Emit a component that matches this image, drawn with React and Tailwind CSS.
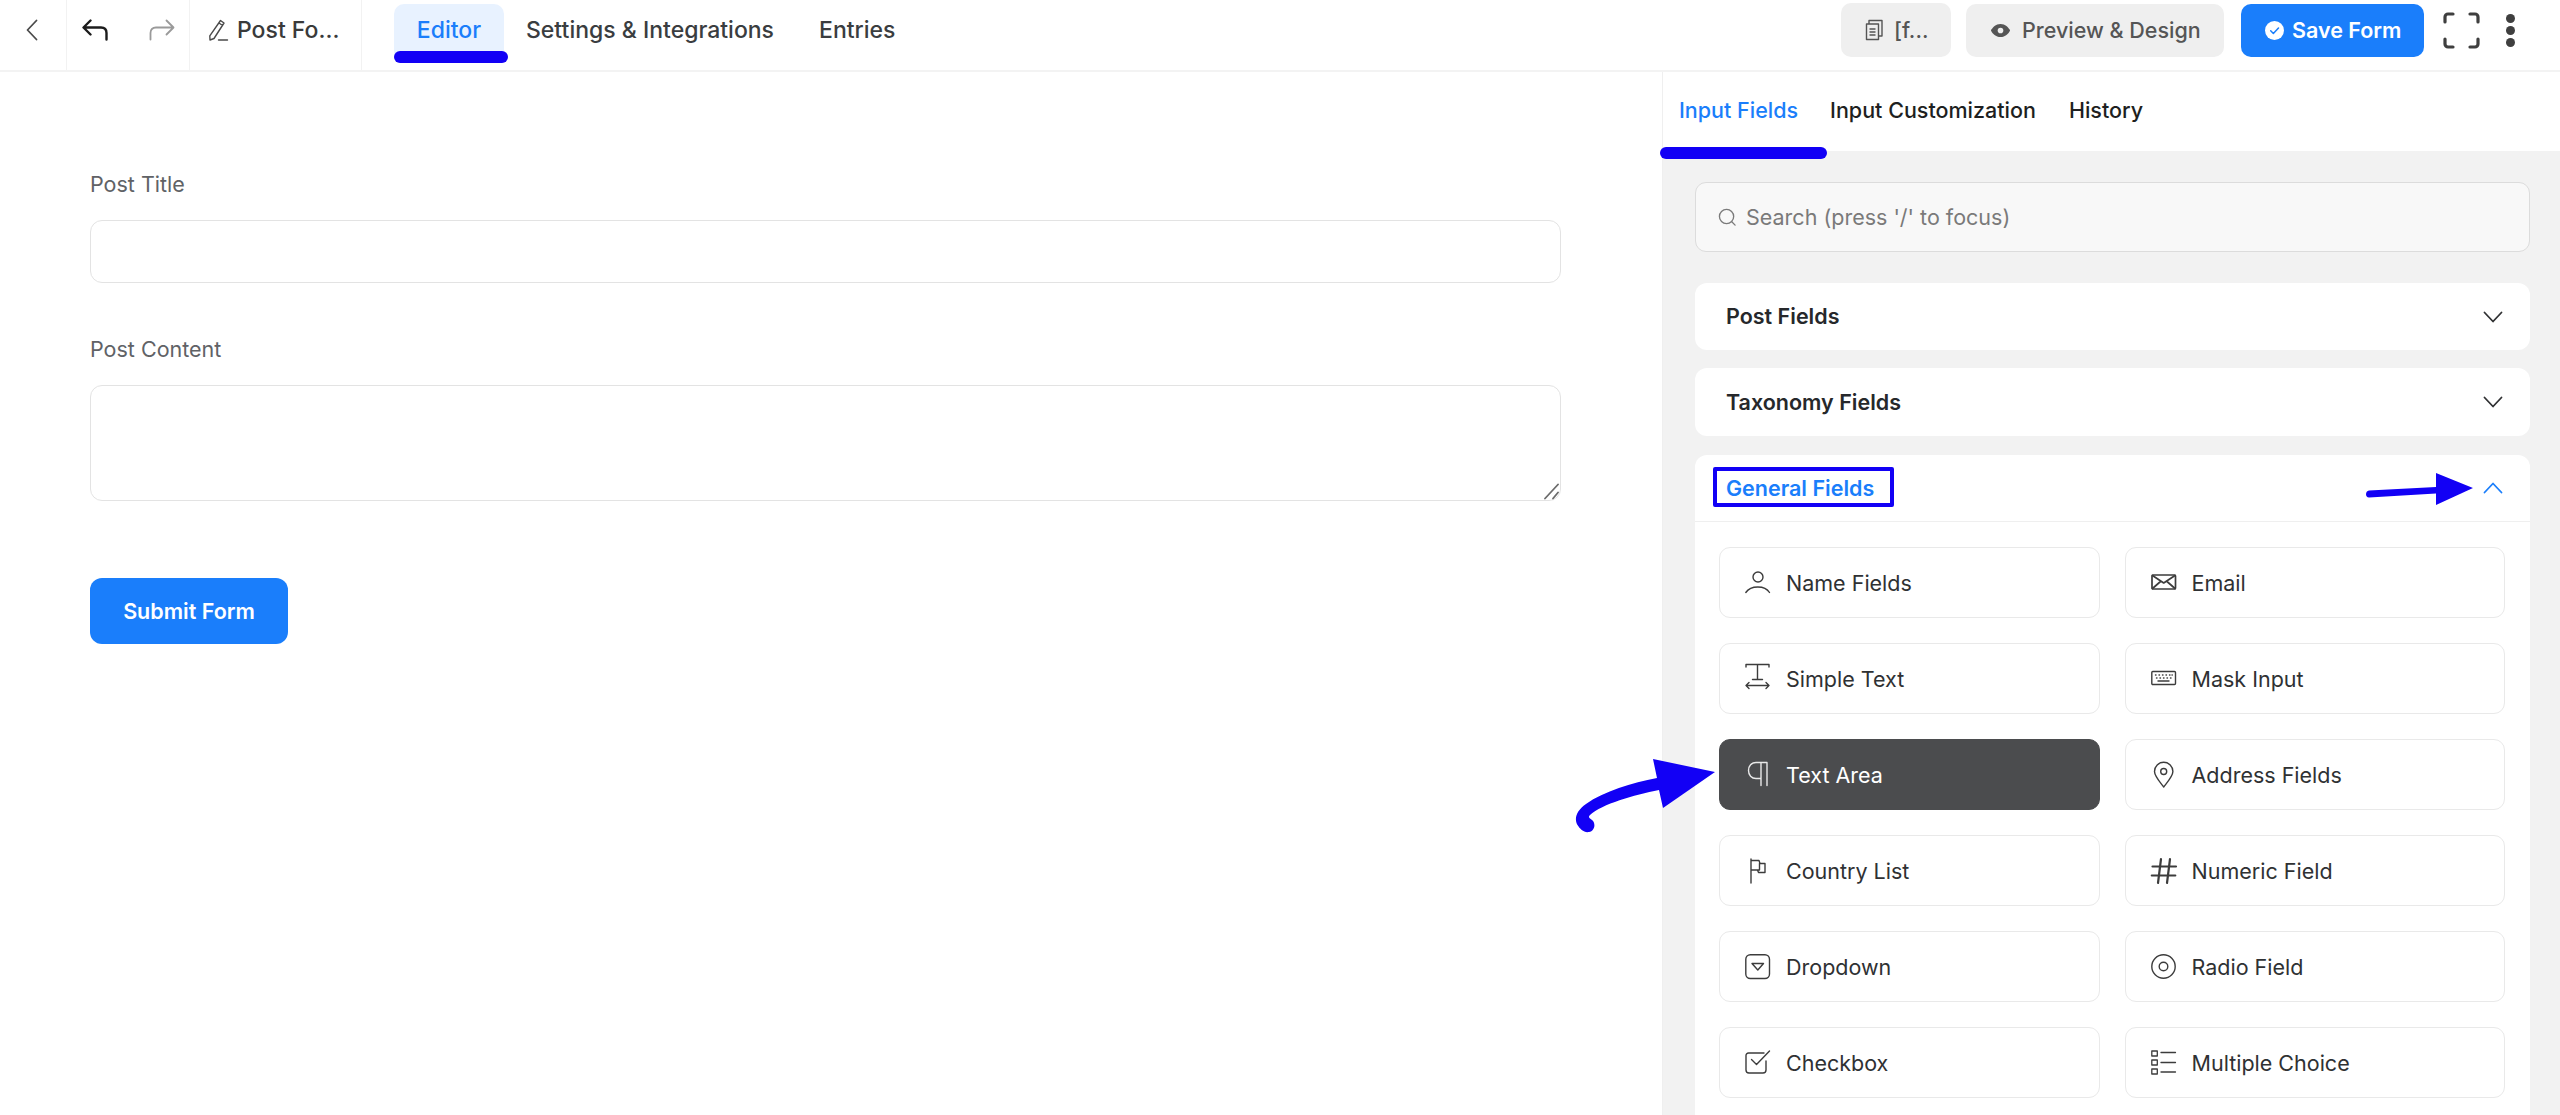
const FONT = "font-['Inter','Noto_Sans',sans-serif]";

const S = ({ children, className = "w-[25px] h-[25px]", vb = "0 0 25 25", sw = 1.4 }) => (
  <svg viewBox={vb} className={className + " shrink-0 overflow-visible"} fill="none" stroke="currentColor" strokeWidth={sw} strokeLinecap="round" strokeLinejoin="round">
    {children}
  </svg>
);

const icons = {
  person: <S><circle cx="13" cy="7" r="5" /><path d="M0.8 22.5C3.5 18.5 8 17 12.8 17s9.2 1.5 11.7 5.5" /></S>,
  email: <S sw={1.7}><rect x="1" y="5" width="23.5" height="14" rx="1" /><path d="M1.5 5.5 12.7 13 24 5.5M1.5 18.5 9.5 11.5M24 18.5 16 11.5" /></S>,
  text: <S><path d="M1 -1.5h23M1 -1.5v2.500M24 -1.5v2.500M12.500 -1.5v15M7.500 13.500h10M1 19.500h23M4 16.500l-3 3 3 3M21 16.500l3 3-3 3" /></S>,
  keyboard: <S sw={1.4}><rect x="0.8" y="5.5" width="23.7" height="13" rx="1" /><path d="M4.5 9h.5M8 9h.5M11.5 9h.5M15 9h.5M18.5 9h.5M21 9h.3M5.5 12h.5M9 12h.5M12.5 12h.5M16 12h.5M19.5 12h.5M7 15h11" /></S>,
  para: <S><path d="M22 0.5H11C6.500 0.5 3.500 4 3.500 8.500s3 8 7.500 8h5M16 0.5V23.500M22 0.5V23.500" /></S>,
  pin: <S><path d="M12.7 25C8.5 19.5 3.5 14 3.5 9.5a9.2 9.2 0 0 1 18.4 0c0 4.5-5 10-9.2 15.5Z" /><circle cx="12.7" cy="9.5" r="3" /></S>,
  flag: <S><path d="M6 1v24M6 2.5 14 2.5 15 5.5H20V14.5H13.5L12.5 12H6M14.5 5.5v6.5h-2" /></S>,
  hash: <S sw={2.2}><path d="M10 1 7 25M19 1 16 25M1.5 8.5h23.5M0.8 17.5h23.5" /></S>,
  dropdown: <S><rect x="0.8" y="0.8" width="23.7" height="23.7" rx="4.5" /><path d="M7 9.5h11.5L12.8 16Z" /></S>,
  radio: <S><circle cx="12.5" cy="12.5" r="11.7" /><circle cx="12.5" cy="12.5" r="4.3" /></S>,
  check: <S><path d="M21 11v9a3 3 0 0 1-3 3H4a3 3 0 0 1-3-3V5.500A2.500 2.500 0 0 1 3.500 3H19M6.500 9.500l5 5L24.500 1" /></S>,
  multi: <S sw={1.3}><rect x="0.8" y="1" width="5.5" height="5" /><rect x="0.8" y="10" width="5.5" height="5" /><rect x="0.8" y="19" width="5.5" height="5" /><path d="M10 2.5h14.5M10 12.5h14.5M10 22h14.5" /></S>,
};

const items = [
  ["person", "Name Fields"], ["email", "Email"],
  ["text", "Simple Text"], ["keyboard", "Mask Input"],
  ["para", "Text Area", true], ["pin", "Address Fields"],
  ["flag", "Country List"], ["hash", "Numeric Field"],
  ["dropdown", "Dropdown"], ["radio", "Radio Field"],
  ["check", "Checkbox"], ["multi", "Multiple Choice"],
];

function FieldCard({ icon, label, active }) {
  return (
    <div className={"h-[71px] rounded-[11px] border flex items-center gap-[16px] pl-[25px] text-[21.5px] " + (active ? "bg-[#4b4c4e] border-[#4b4c4e] text-white" : "bg-white border-[#e9e9e9] text-[#2f3133]")}>
      <span className={active ? "text-[#e9e9e9]" : "text-[#3c3c3c]"}>{icons[icon]}</span>
      <span className="pt-[2px]">{label}</span>
    </div>
  );
}

const Chevron = ({ up, color = "#303133" }) => (
  <svg viewBox="0 0 20 12" className="w-[20px] h-[12px]" fill="none" stroke={color} strokeWidth="1.8" strokeLinecap="round" strokeLinejoin="round">
    <path d={up ? "M1.5 10.5 10 1.5l8.5 9" : "M1.5 1.5 10 10.5l8.5-9"} />
  </svg>
);

export default function App() {
  return (
    <div className={FONT + " relative w-full h-[1115px] overflow-hidden bg-white flex flex-col"}>
      {/* top bar */}
      <header className="h-[72px] shrink-0 border-b-2 border-[#f3f3f3] flex items-stretch bg-white">
        <div className="w-[67px] border-r border-[#f2f2f2] flex items-center justify-center pr-[2px] pb-[10px]">
          <svg viewBox="0 0 12 22" className="w-[12px] h-[22px]" fill="none" stroke="#4b4b4b" strokeWidth="1.8" strokeLinecap="round" strokeLinejoin="round"><path d="M10.5 1.5 1.5 11l9 9.5" /></svg>
        </div>
        <div className="w-[123px] border-r border-[#f2f2f2] flex items-center pl-[15px] gap-[41px] pb-[10px]">
          <svg viewBox="0 0 26 22" className="w-[26px] h-[22px]" fill="none" stroke="#1c1c1c" strokeWidth="2.4" strokeLinecap="round" strokeLinejoin="round"><path d="M8.5 1.5 1.5 8.5l7 7M2 8.5h17c3.500 0 5.500 2 5.500 5.500v6.500" /></svg>
          <svg viewBox="0 0 26 22" className="w-[26px] h-[22px]" fill="none" stroke="#9a9a9a" strokeWidth="1.8" strokeLinecap="round" strokeLinejoin="round"><path d="M17.500 1.500l7 7-7 7M24 8.500H7C3.500 8.500 1.500 10.500 1.500 14v6.500" /></svg>
        </div>
        <div className="w-[172px] border-r border-[#f2f2f2] flex items-center pl-[17px] gap-[8px] pb-[10px] text-[23px] text-[#3a3a3a] font-medium">
          <svg viewBox="0 0 22 24" className="w-[22px] h-[24px] shrink-0" fill="none" stroke="#4a4a4a" strokeWidth="1.4" strokeLinecap="round" strokeLinejoin="round"><path d="M13.500 2.500l3.500 2.500L7 20.500l-4 1.500-.2-4.200ZM12 5l3.500 2.500M11.500 22h9" /></svg>
          <span>Post Fo...</span>
        </div>
        <nav className="flex items-start pl-[32px] pt-[4px] text-[23px] font-medium text-[#3a3d40]">
          <div className="h-[52px] w-[110px] rounded-t-[10px] rounded-b-none bg-[#e8f2ff] text-[#1a7efb] flex items-center justify-center">Editor</div>
          <div className="h-[52px] flex items-center ml-[22px]">Settings &amp; Integrations</div>
          <div className="h-[52px] flex items-center ml-[45px]">Entries</div>
        </nav>
        <div className="ml-auto flex items-start pt-[3px] pr-[45px]">
          <button className="h-[54px] w-[110px] rounded-[10px] bg-[#efefef] flex items-center gap-[9px] pl-[22px] text-[21.5px] text-[#555555] font-medium">
            <svg viewBox="0 0 22 24" className="w-[22px] h-[24px] shrink-0" fill="none" stroke="#555" strokeWidth="1.400" strokeLinejoin="round"><path d="M6 6V2.500h13V18h-3" /><path d="M3.500 6H15.500V21.500H3.500Z" /><path d="M6.500 11H12.500M6.500 14H12.500M6.500 17H12.500" /></svg>
            <span>[f...</span>
          </button>
          <button className="h-[53px] w-[258px] ml-[15px] mt-[1px] rounded-[10px] bg-[#efefef] flex items-center gap-[11px] pl-[24px] text-[21.5px] text-[#555555] font-medium">
            <svg viewBox="0 0 22 16" className="w-[21px] h-[15px] shrink-0"><path d="M11 1C6 1 2.500 4.500.8 8c1.700 3.500 5.200 7 10.200 7s8.500-3.500 10.200-7C19.500 4.500 16 1 11 1Z" fill="#555" /><circle cx="11" cy="8" r="3" fill="#efefef" /></svg>
            <span>Preview &amp; Design</span>
          </button>
          <button className="h-[53px] w-[183px] ml-[17px] mt-[1px] rounded-[10px] bg-[#1a7efb] flex items-center gap-[8px] pl-[24px] text-[21.5px] text-white font-semibold">
            <svg viewBox="0 0 20 20" className="w-[19px] h-[19px] shrink-0"><circle cx="10" cy="10" r="10" fill="#fff" /><path d="M6 10.300l2.800 2.800L14.200 7.300" fill="none" stroke="#1a7efb" strokeWidth="1.600" strokeLinecap="round" strokeLinejoin="round" /></svg>
            <span>Save Form</span>
          </button>
          <svg viewBox="0 0 37 37" className="w-[37px] h-[37px] ml-[19px] mt-[9px]" fill="none" stroke="#3f3f3f" strokeWidth="3.200" strokeLinecap="round" strokeLinejoin="round"><path d="M2 10V5a3 3 0 0 1 3-3h5M27 2h5a3 3 0 0 1 3 3v5M35 27v5a3 3 0 0 1-3 3h-5M10 35H5a3 3 0 0 1-3-3v-5" /></svg>
          <div className="ml-[26px] mt-[11px] flex flex-col gap-[3px]">
            <span className="block w-[9px] h-[9px] rounded-full bg-[#3f3f3f]" />
            <span className="block w-[9px] h-[9px] rounded-full bg-[#3f3f3f]" />
            <span className="block w-[9px] h-[9px] rounded-full bg-[#3f3f3f]" />
          </div>
        </div>
      </header>

      <div className="flex-1 flex min-h-0">
        {/* form canvas */}
        <main className="w-[1662px] shrink-0 pl-[90px] pr-[101px] pt-[96px] text-[#606266]">
          <label className="block h-[32px] leading-[32px] text-[21.5px] mb-[20px]">Post Title</label>
          <input className="block w-full h-[63px] rounded-[12px] border border-[#e3e3e3] bg-white outline-none" />
          <label className="block h-[32px] leading-[32px] text-[21.5px] mt-[50px] mb-[20px]">Post Content</label>
          <div className="relative">
            <textarea className="block w-full h-[116px] rounded-[12px] border border-[#e3e3e3] bg-white outline-none resize-none" />
            <svg viewBox="0 0 16 17" className="absolute right-[1px] bottom-[1px] w-[16px] h-[17px]" fill="none" stroke="#6b6b6b" strokeWidth="1.800" strokeLinecap="round"><path d="M1 15.500 14 1.500M9 15.500 14 9.500" /></svg>
          </div>
          <button className="block mt-[77px] w-[198px] h-[66px] rounded-[12px] bg-[#1a7efb] text-white text-[21.5px] font-semibold">Submit Form</button>
        </main>

        {/* sidebar */}
        <aside className="flex-1 min-w-0 flex flex-col border-l border-[#efefef]">
          <div className="h-[79px] shrink-0 flex items-start pt-[22px] pl-[16px] text-[21.5px] font-medium text-[#1e1f21] bg-white">
            <span className="text-[#1a7efb]">Input Fields</span>
            <span className="ml-[32px]">Input Customization</span>
            <span className="ml-[33px]">History</span>
          </div>
          <div className="flex-1 min-h-0 overflow-hidden bg-[#f2f2f2] pl-[32px] pr-[30px] pt-[31px]">
            <div className="h-[70px] rounded-[11px] border border-[#dcdcdc] bg-[#f8f8f8] flex items-center pl-[22px] gap-[9px] text-[21.5px] text-[#7a7a7a]">
              <svg viewBox="0 0 20 20" className="w-[19px] h-[19px] shrink-0" fill="none" stroke="#7a7a7a" strokeWidth="1.400" strokeLinecap="round"><circle cx="9" cy="9" r="7.500" /><path d="M14.500 14.500 18 18" /></svg>
              <span>Search (press '/' to focus)</span>
            </div>
            <div className="mt-[31px] h-[67px] rounded-[12px] bg-white flex items-center justify-between pl-[31px] pr-[27px] text-[21.5px] font-semibold text-[#26282b]">
              <span>Post Fields</span><Chevron />
            </div>
            <div className="mt-[18px] h-[68px] rounded-[12px] bg-white flex items-center justify-between pl-[31px] pr-[27px] text-[21.5px] font-semibold text-[#26282b]">
              <span>Taxonomy Fields</span><Chevron />
            </div>
            <div className="mt-[19px] rounded-t-[12px] bg-white min-h-[700px]">
              <div className="h-[67px] border-b border-[#efefef] flex items-center justify-between pl-[31px] pr-[27px] text-[21.5px] font-semibold text-[#1a7efb]">
                <span>General Fields</span><Chevron up color="#1a7efb" />
              </div>
              <div className="grid grid-cols-2 gap-x-[25px] gap-y-[25px] pt-[25px] pl-[24px] pr-[25px]">
                {items.map(([i, l, a]) => <FieldCard key={l} icon={i} label={l} active={a} />)}
              </div>
            </div>
          </div>
        </aside>
      </div>

      {/* blue annotations over the screenshot */}
      <div className="absolute left-[394px] top-[51px] w-[114px] h-[12px] rounded-full bg-[#1200f5]" />
      <div className="absolute left-[1660px] top-[147px] w-[167px] h-[12px] rounded-full bg-[#1200f5]" />
      <div className="absolute left-[1713px] top-[467px] w-[181px] h-[40px] rounded-[2px] border-[4px] border-[#1200f5]" />
      <svg viewBox="0 0 110 34" className="absolute left-[2365px] top-[472px] w-[110px] h-[34px]" fill="#1200f5">
        <path d="M4 18.500 71 15 71 1 108 16 71 33 71 21.500 4 25.500C0 25.500 0 19 4 18.500Z" />
      </svg>
      <svg viewBox="0 0 145 80" className="absolute left-[1574px] top-[757px] w-[145px] h-[80px]" fill="#1200f5">
        <path d="M79 2 141 15 89 51 85 33C60 38 28 47 16 58 14 60 15 61 18 63 22 66 21 74 15 75 10 76 6 72 3.500 68 0 62 2 54 12 47 30 34 58 26 83 21Z" />
      </svg>
    </div>
  );
}
